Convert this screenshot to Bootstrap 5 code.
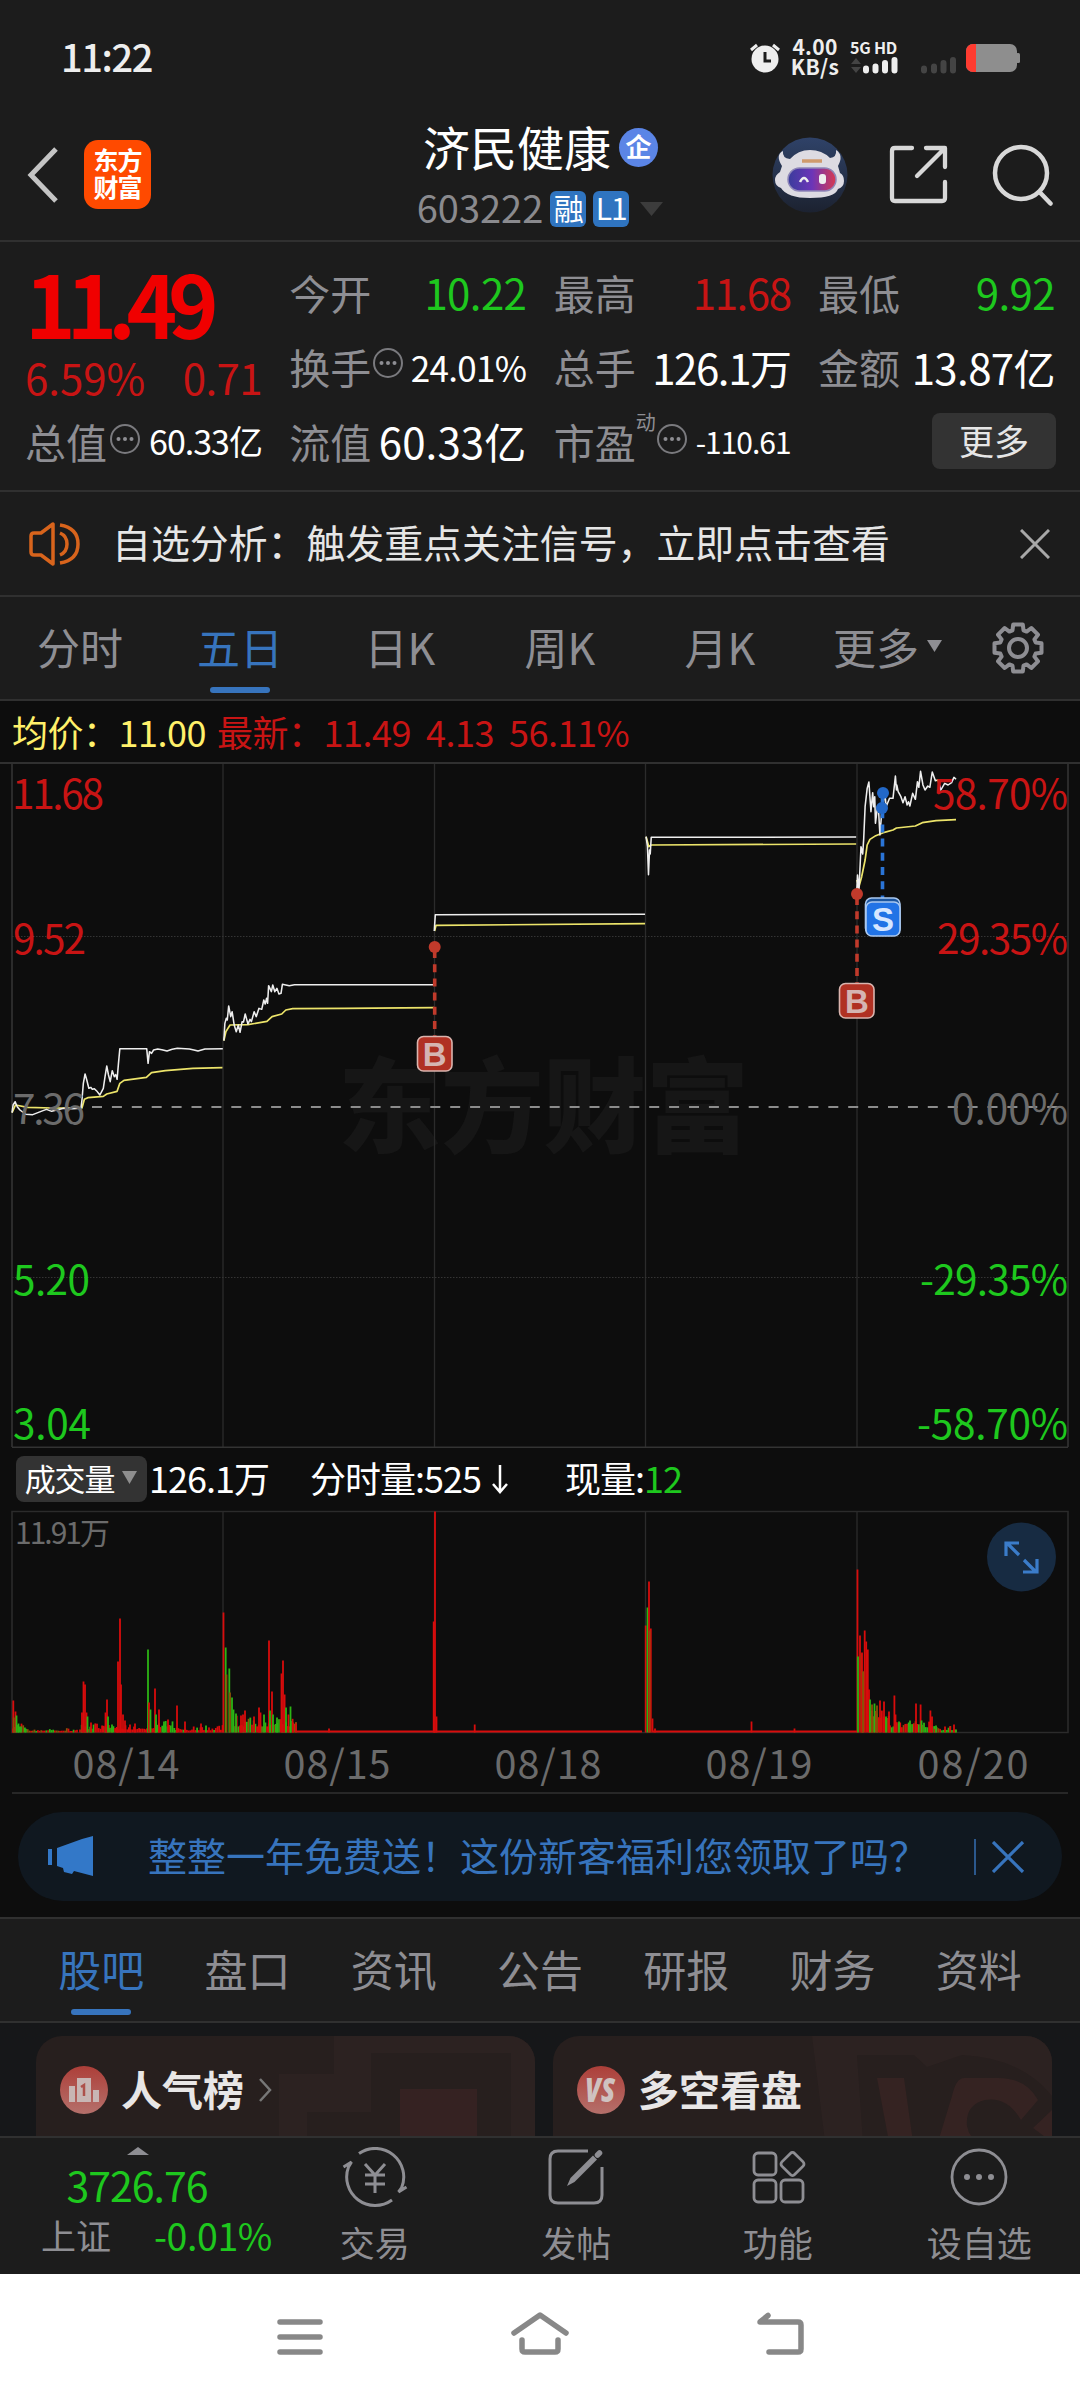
<!DOCTYPE html>
<html lang="zh-CN">
<head>
<meta charset="utf-8">
<meta name="viewport" content="width=device-width, initial-scale=1">
<title>济民健康 603222</title>
<link href="https://cdn.jsdelivr.net/npm/bootstrap@5.3.0/dist/css/bootstrap.min.css" rel="stylesheet">
<style>
body{margin:0;background:#0d0d0d;color:#fff;font-family:"Noto Sans CJK SC",sans-serif;line-height:1;width:1080px;overflow-x:hidden}
svg{display:block;flex:none}
svg text{font-family:"Noto Sans CJK SC",sans-serif}
.panel{background:#1c1c1c}
.line-b{border-bottom:2px solid #303030}
.lbl{color:#8e8e93}
.up{color:#c81414}.dn{color:#1ec81e}.blu{color:#3774bd}
/* status bar */
.statusbar{height:115px;padding:0 59px 0 61px}
.clock{font-size:38px;font-weight:500;letter-spacing:-1.4px;color:#eee;padding-bottom:4px}
.speed{font-size:21px;font-weight:700;line-height:20px;color:#eee;text-align:center;width:54px;letter-spacing:.3px;padding-bottom:4px}
.gen{font-size:16px;font-weight:700;color:#eee;letter-spacing:-.2px;white-space:nowrap;margin-top:-3px;padding-bottom:2px}
.sim2{margin:16px 0 0 21px}
/* header */
.header{height:127px;padding:0 26px 6px 27px}
.h-side{width:270px}
.logo{width:67px;height:69px;border-radius:14px;background:#ff4a00;font-size:25px;font-weight:700;line-height:27px;letter-spacing:-1px}
.ttl{font-size:47px;height:48px;margin-top:4px}
.code{font-size:38px;letter-spacing:0;color:#8a8a8e}
.tagb{width:36px;height:36px;border-radius:6px;background:#2f74c0;font-size:30px;letter-spacing:-1px}
.ent{width:39px;height:39px;border-radius:50%;background:#5b85e6;font-size:26px;font-weight:700}
/* quote */
.quote{height:250px;padding:13px 25px 0 25px}
.qcol{width:237px}
.qrow{height:74.5px;font-size:41px}
.q42{font-size:42px;letter-spacing:-.6px}
.q36{font-size:35px;letter-spacing:-.7px}
.q34{font-size:34px;letter-spacing:-1px}
.q30{font-size:30px;letter-spacing:-1px}
.tight{letter-spacing:-1.4px}
.price{font-size:86px;font-weight:700;letter-spacing:-9.3px;color:#f00000;height:94px}
.chg{height:55px}
.morebtn{width:124px;height:56px;border-radius:8px;background:#333;font-size:35px;color:#e6e6e6;padding-bottom:4px;margin-right:-1px}
.supt{font-size:20px;margin-top:-38px}
/* notice */
.notice{height:105px;padding:0 30px 0 29px;font-size:38.9px;color:#e6e6e6}
/* tabs */
.ktabs{height:104px;font-size:43px;color:#8e8e93}
.ktabs>.tabitem{width:160px}
.ktabs>.tabitem.wide{width:176px}
.tabitem{position:relative;height:100%}
.tabitem.active{color:#3774bd}
.tabitem.active::after{content:"";position:absolute;left:50%;bottom:6px;width:60px;height:6px;border-radius:3px;background:#3774bd;transform:translateX(-50%)}
.inforow{height:63px;font-size:36px;padding:0 12px 2px;letter-spacing:-.5px;white-space:pre}
.volrow{height:62px;padding:0 16px}
.pillsel{width:131px;height:46px;border-radius:8px;background:#333;font-size:31px;letter-spacing:-1.2px}
.v36{font-size:36px;letter-spacing:-1px;white-space:pre}
/* promo */
.promo{margin:18px 18px;height:89px;border-radius:45px;background:#101820;color:#3774bd;font-size:39px;padding:0 37px 0 29px}
.sep{width:2px;height:36px;background:#2b588d}
/* bottom tabs */
.ntabs{height:104px;padding:0 28px;font-size:43px;color:#8e8e93;box-shadow:0 -2px #303030}
.feed{height:115px;background:#161719;padding:13px 28px 0 36px;overflow:hidden}
.topic{position:relative;width:499px;height:140px;border-radius:26px;background:#271f1e;overflow:hidden;font-size:41px;font-weight:700;color:#e8e6e6}
.topic>.bgart{position:absolute;inset:0}
.topic>.topichead{position:relative;height:108px;padding-left:24px}
.dock{height:136px;color:#8e8e93;font-size:35px}
.dockitem{width:201.5px;padding-top:9px}
.docklbl{margin-top:17px}
.idx{width:274px}
.idxval{font-size:41px;letter-spacing:-1px;margin-top:8px}
.idxpct{font-size:37.5px;letter-spacing:-.4px}
.sysnav{height:126px;background:#fff}
.nudge{padding-bottom:4px}
</style>
<script src="https://cdn.jsdelivr.net/npm/bootstrap@5.3.0/dist/js/bootstrap.bundle.min.js"></script>
</head>
<body>
<div class="panel">
  <div class="statusbar d-flex align-items-center justify-content-between">
    <div class="clock">11:22</div>
    <div class="d-flex align-items-center">
      <svg width="30" height="32" viewBox="0 0 30 32"><circle cx="15" cy="17" r="13.500" fill="#eee"/><path d="M1 8 7 3M29 8 23 3" stroke="#eee" stroke-width="3"/><path d="M15 10v9h6" fill="none" stroke="#1c1c1c" stroke-width="3"/></svg>
      <div class="speed ms-2">4.00<br>KB/s</div>
      <div class="ms-2">
        <div class="gen">5G HD</div>
        <svg width="50" height="17" viewBox="0 0 50 17"><path d="M1 7 6 1l5 6zM1 10l5 6 5-6z" fill="#444"/><path d="M16 13.500v-2M25.500 13.500v-4M35 13.500V6M44.500 13.500V3" stroke="#eee" stroke-width="6" stroke-linecap="round"/></svg>
      </div>
      <svg class="sim2" width="36" height="17" viewBox="0 0 36 17"><path d="M3 13.500v-2M13 13.500v-4M22.500 13.500V6M32 13.500V3" stroke="#444" stroke-width="6" stroke-linecap="round"/></svg>
      <svg style="margin-left:9px" width="55" height="28" viewBox="0 0 55 28"><rect width="51" height="28" rx="7" fill="#8e8e8e"/><path d="M10 0H7a7 7 0 0 0-7 7v14a7 7 0 0 0 7 7h3z" fill="#ff3b30"/><rect x="50" y="9" width="4" height="10" rx="1.500" fill="#8e8e8e"/></svg>
    </div>
  </div>
  <div class="header line-b d-flex align-items-center justify-content-between">
    <div class="h-side d-flex align-items-center">
      <svg width="34" height="58" viewBox="0 0 34 58"><path d="M29 3 4 29l25 26" fill="none" stroke="#c4c4c4" stroke-width="5"/></svg>
      <div class="logo d-flex align-items-center justify-content-center text-center nudge" style="margin-left:23px">东方<br>财富</div>
    </div>
    <div class="d-flex flex-column align-items-center">
      <div class="d-flex align-items-center gap-2 ttl"><span class="nudge">济民健康</span><span class="ent d-flex align-items-center justify-content-center pb-1">企</span></div>
      <div class="d-flex align-items-center mt-3" style="gap:7px"><span class="code nudge">603222</span><span class="tagb d-flex align-items-center justify-content-center pb-1">融</span><span class="tagb d-flex align-items-center justify-content-center pb-1">L1</span>
      <svg class="ms-1" width="24" height="16"><path d="M0 1h23L11.500 15z" fill="#3c3c3c"/></svg></div>
    </div>
    <div class="h-side d-flex align-items-center justify-content-end">
      <svg width="76" height="76" viewBox="0 0 76 76"><defs><linearGradient id="vis" x1="0" x2="1"><stop offset="0" stop-color="#3a3c9c"/><stop offset=".5" stop-color="#6c35b8"/><stop offset="1" stop-color="#d83a50"/></linearGradient><linearGradient id="halo" x2="0" y2="1"><stop offset="0" stop-color="#2f4268"/><stop offset="1" stop-color="#1c2230"/></linearGradient></defs><circle cx="38" cy="38" r="37.500" fill="url(#halo)"/><path d="M10 29Q3 18 11 14q-1 7 7 8 8-9 20-9t20 8q7-1 6-8 8 5 2 16l2 7q4 2 4 8t-6 8q-3 9-28 9-23 0-29-10-6-2-6-8 0-5 5-8z" fill="#dddbe2"/><rect x="16" y="31" width="48" height="23" rx="11.500" fill="url(#vis)" stroke="#8e86b8" stroke-width="1.500"/><path d="M28 45q4-8 8 0" stroke="#eee" stroke-width="2.500" fill="none"/><rect x="47" y="37" width="7" height="10" rx="3" fill="#eee"/><path d="M30 24h20" stroke="#cf9a6c" stroke-width="3.500"/></svg>
      <svg style="margin-left:40px" width="62" height="62" viewBox="0 0 62 62" fill="none" stroke="#d8d8d8" stroke-width="4.300" stroke-linecap="round" stroke-linejoin="round"><path d="M24 4H7Q4 4 4 7v47q0 3 3 3h47q3 0 3-3V38M38 4h19v19M56 5 29 32"/></svg>
      <svg style="margin-left:42px" width="62" height="62" viewBox="0 0 62 62" fill="none" stroke="#d8d8d8" stroke-width="4.500" stroke-linecap="round"><circle cx="29" cy="29" r="26"/><path d="m47.500 48 11 11.500"/></svg>
    </div>
  </div>
  <div class="quote line-b d-flex justify-content-between">
    <div class="qcol d-flex flex-column">
      <div class="price d-flex align-items-center">11.49</div>
      <div class="chg d-flex justify-content-between align-items-center up q42"><span style="letter-spacing:0">6.59%</span><span>0.71</span></div>
      <div class="qrow d-flex align-items-center justify-content-between"><span class="lbl d-flex align-items-center">总值<svg style="margin:-3px 0 0 2px" width="32" height="32"><use href="#dots3"/></svg></span><span class="q34">60.33亿</span></div>
    </div>
    <div class="qcol">
      <div class="qrow d-flex align-items-center justify-content-between"><span class="lbl">今开</span><span class="dn q42">10.22</span></div>
      <div class="qrow d-flex align-items-center justify-content-between"><span class="lbl d-flex align-items-center">换手<svg style="margin:-5px 0 0 1px" width="32" height="32"><use href="#dots3"/></svg></span><span class="q36">24.01%</span></div>
      <div class="qrow d-flex align-items-center justify-content-between"><span class="lbl">流值</span><span class="q42" style="letter-spacing:.1px">60.33亿</span></div>
    </div>
    <div class="qcol">
      <div class="qrow d-flex align-items-center justify-content-between"><span class="lbl">最高</span><span class="up q42 tight">11.68</span></div>
      <div class="qrow d-flex align-items-center justify-content-between"><span class="lbl">总手</span><span class="q42 tight">126.1万</span></div>
      <div class="qrow d-flex align-items-center justify-content-between"><span class="lbl d-flex align-items-center">市盈<span class="supt">动</span><svg style="margin-top:-3px" width="32" height="32"><use href="#dots3"/></svg></span><span class="q30">-110.61</span></div>
    </div>
    <div class="qcol">
      <div class="qrow d-flex align-items-center justify-content-between"><span class="lbl">最低</span><span class="dn q42">9.92</span></div>
      <div class="qrow d-flex align-items-center justify-content-between"><span class="lbl">金额</span><span class="q42">13.87亿</span></div>
      <div class="qrow d-flex align-items-center justify-content-end"><span class="morebtn d-flex align-items-center justify-content-center">更多</span></div>
    </div>
  </div>
  <div class="notice line-b d-flex align-items-center">
    <svg width="52" height="44" viewBox="0 0 52 44" fill="none" stroke="#d8641c" stroke-width="3.500" stroke-linejoin="round"><path d="M24 2v40L12 33H5q-3 0-3-3V14q0-3 3-3h7z"/><path d="M31 11q7 3 7 11t-7 11M31 3q18 3 18 19T31 41"/></svg>
    <span class="flex-grow-1 nudge" style="margin-left:31px">自选分析：触发重点关注信号，立即点击查看</span>
    <svg width="30" height="30" stroke="#a8a8a8" stroke-width="3"><path d="m1 1 28 28M29 1 1 29"/></svg>
  </div>
  <div class="ktabs line-b d-flex align-items-center">
    <span class="tabitem d-flex align-items-center justify-content-center nudge">分时</span>
    <span class="tabitem active d-flex align-items-center justify-content-center nudge">五日</span>
    <span class="tabitem d-flex align-items-center justify-content-center nudge">日K</span>
    <span class="tabitem d-flex align-items-center justify-content-center nudge">周K</span>
    <span class="tabitem d-flex align-items-center justify-content-center nudge">月K</span>
    <span class="tabitem wide d-flex align-items-center justify-content-center nudge">更多<svg class="ms-2" width="16" height="12"><path d="M0 0h15L7.500 12z" fill="#8e8e93"/></svg></span>
    <svg style="margin-left:16px" width="52" height="52" viewBox="-26 -26 52 52" fill="none" stroke="#8e8e93" stroke-width="4"><path id="gear" stroke-linejoin="round"/><circle r="9"/></svg>
  </div>
</div>
<div class="inforow line-b d-flex align-items-center"><span style="color:#fff06a">均价：11.00</span><span class="up" style="margin-left:11px">最新：11.49  4.13  56.11%</span></div>

<svg id="price" width="1080" height="684" viewBox="0 764 1080 684">
  <text x="338" y="1145" font-size="103" font-weight="900" textLength="411" fill="#161616">东方财富</text>
  <g stroke="#2b2b2b" stroke-width="1.300"><path d="M223 764v683M434.500 764v683M645.500 764v683M857 764v683"/><path d="M12 764v683M1068 764v683" stroke-width="2"/></g>
  <path d="M12 936.500H1068M12 1277.500H1068" stroke="#343434" stroke-dasharray="1.500 1.500"/>
  <path d="M12 1447.500H1068" stroke="#333" stroke-width="2"/>
  <path d="M92 1107H1066" stroke="#8c8c8c" stroke-width="1.800" stroke-dasharray="10 9.900"/>
  <g fill="none" stroke-linejoin="round" transform="translate(0 820) scale(.34439 .33333)">
    <g stroke="#ece46a" stroke-width="5">
      <path d="M35 878 45 855 80 862 150 864 238 864 245 838 255 833 300 829 310 822 340 814 348 790 360 781 425 772 440 758 480 752 560 745 646 743"/>
      <path d="M650 662 656 635 668 615 720 614 775 604 790 590 818 582 830 570 850 566 1000 565 1260 563"/>
      <path d="M1262 333 1266 316 1873 311"/>
      <path d="M1876 50 1884 80 1891 75 2486 72"/>
      <path d="M2488 180 2494 200 2502 170 2512 120 2518 75 2526 58 2543 47 2568 37 2593 30 2603 24 2658 18 2678 8 2718 2 2776-1"/>
    </g>
    <g stroke="#eee" stroke-width="4.500">
      <path d="M35 878 38 855 44 845 50 860 58 870 75 883 95 884 110 878 125 872 135 868 150 874 165 870 185 865 210 866 235 865 238 840 242 790 247 762 252 780 258 805 264 802 268 808 274 806 280 812 290 825 300 805 305 770 310 738 315 765 320 785 326 752 332 770 336 764 340 778 344 730 348 686 426 686 430 730 434 695 440 700 446 690 458 687 470 689 485 693 500 688 515 685 550 687 563 690 575 693 595 687 647 686"/>
      <path d="M650 662 653 610 657 595 660 600 664 558 670 590 674 575 680 615 686 635 692 615 697 637 703 605 707 606 712 582 720 612 726 598 730 605 738 575 744 590 752 565 760 568 766 540 770 552 774 535 777 550 780 497 788 515 792 495 798 515 804 505 810 522 816 520 820 493 840 497 855 494 1259 494"/>
      <path d="M1261 333 1264 284 1873 283"/>
      <path d="M1876 50 1880 80 1883 164 1886 90 1888 102 1891 52 2486 51"/>
      <path d="M2488 210 2490 165 2494 215 2500 80 2505 102 2508 55 2512-40 2518-95 2523-114 2529-25 2534-82 2537-40 2540-70 2542 10 2548-40 2551-30 2555 45 2560-20 2566-60 2569-85 2573-40 2583-65 2593-65 2600-132 2603-90 2604-105 2608-85 2616-70 2622-52 2628-70 2634-45 2638-55 2642-42 2650-80 2658-62 2664-115 2668-98 2673-146 2680-105 2686-90 2694-102 2700-98 2707-144 2716-118 2723-120 2732-90 2743-110 2753-105 2763-112 2770-128 2776-122"/>
    </g>
  </g>
  <g stroke-dasharray="8 6.200" stroke-width="3.600"><path d="M434.700 950v86M857 897v86" stroke="#c03a2b"/><path d="M882.500 796v102" stroke="#2a74d6"/></g>
  <g fill="#c03a2b"><circle cx="434.700" cy="947" r="6"/><circle cx="857" cy="894" r="6"/></g>
  <g fill="#2268c8"><circle cx="883" cy="793" r="6"/><circle cx="882" cy="808" r="6"/></g>
  <g stroke="#d9b4ae" stroke-width="1.600"><rect x="417.500" y="1036.500" width="34.500" height="34.500" rx="6" fill="#b03123"/><rect x="839.500" y="983.500" width="34.500" height="34.500" rx="6" fill="#b03123"/></g>
  <g stroke="#a9c8f0" stroke-width="1.600"><rect x="865.500" y="898" width="34.500" height="36" rx="6" fill="#1b559f"/><rect x="866" y="902" width="34" height="34" rx="6" fill="#2173e6"/></g>
  <g font-size="33" font-weight="700" text-anchor="middle" style="font-family:'Liberation Sans',sans-serif"><text style="font-family:inherit" x="434.700" y="1066" fill="#d5b5b2">B</text><text style="font-family:inherit" x="857" y="1013" fill="#d5b5b2">B</text><text style="font-family:inherit" x="883" y="931" fill="#d7e7ff">S</text></g>
  <g font-size="40.500">
    <text x="12" y="809" textLength="92" fill="#c81414">11.68</text>
    <text x="13" y="954" textLength="73" fill="#c81414">9.52</text>
    <text x="13" y="1124" textLength="72" fill="#6b6b6b">7.36</text>
    <text x="13" y="1295" textLength="77" fill="#1ec81e">5.20</text>
    <text x="13" y="1439" textLength="78" fill="#1ec81e">3.04</text>
    <g>
      <text x="933" y="809" textLength="135" fill="#c81414">58.70%</text>
      <text x="937" y="954" textLength="131" fill="#c81414">29.35%</text>
      <text x="952" y="1124" textLength="116" fill="#6b6b6b">0.00%</text>
      <text x="920" y="1295" textLength="148" fill="#1ec81e">-29.35%</text>
      <text x="917" y="1439" textLength="151" fill="#1ec81e">-58.70%</text>
    </g>
  </g>
</svg>
<div class="volrow d-flex align-items-center">
  <div class="pillsel d-flex align-items-center justify-content-center nudge">成交量<svg class="ms-2" width="16" height="13"><path d="M0 0h15L7.500 13z" fill="#8e8e8e"/></svg></div>
  <span class="v36 nudge" style="margin-left:2px">126.1万</span><span class="v36 nudge" style="margin-left:41px">分时量:525</span><svg width="18" height="32" viewBox="0 0 18 32" style="margin-left:10px" fill="none" stroke="#fff" stroke-width="2.500"><path d="M9 2v27M2 21l7 8 7-8"/></svg>
  <span class="v36 nudge" style="margin-left:56px">现量:<span class="dn">12</span></span>
</div>
<svg id="volume" width="1080" height="284" viewBox="0 1510 1080 284">
  <g fill="none" stroke="#2b2b2b"><path d="M12 1511.500H1068V1732.500H12z" stroke-width="1.600"/><path d="M223 1511v221M434.500 1511v221M645.500 1511v221M857 1511v221" stroke-width="1.300"/></g>
  <g id="bars"></g>
  <text x="15" y="1544" font-size="30" textLength="95" fill="#6b6b6b">11.91万</text>
  <g font-size="39.500" fill="#6b6b6b" text-anchor="middle"><text x="126" y="1779" textLength="107">08/14</text><text x="337" y="1779" textLength="107">08/15</text><text x="548" y="1779" textLength="107">08/18</text><text x="759" y="1779" textLength="107">08/19</text><text x="973" y="1779" textLength="111">08/20</text></g>
  <path d="M12 1793H1068" stroke="#272727" stroke-width="2"/>
  <circle cx="1021.500" cy="1557" r="34.500" fill="#172b42"/>
  <path d="M1019 1543h-13v13M1007 1543l12 12M1024 1560l12 12M1037 1559v13h-14" fill="none" stroke="#3b7cc9" stroke-width="3.200"/>
</svg>
<div class="promo d-flex align-items-center">
  <svg width="47" height="42" viewBox="0 0 47 42" fill="#3378c8"><path d="M1 13h4v16H1zM10 12l25-9 11-3v40l-19-5-2 3-8-2-1-4-6-2z"/></svg>
  <span class="flex-grow-1 nudge" style="margin-left:54px">整整一年免费送！这份新客福利您领取了吗？</span>
  <span class="sep"></span>
  <svg style="margin-left:16px" width="33" height="32" stroke="#3774bd" stroke-width="3.200"><path d="m1 1 30 30M31 1 1 31"/></svg>
</div>
<div class="panel ntabs line-b d-flex">
  <span class="tabitem active flex-fill d-flex align-items-center justify-content-center nudge">股吧</span><span class="tabitem flex-fill d-flex align-items-center justify-content-center nudge">盘口</span><span class="tabitem flex-fill d-flex align-items-center justify-content-center nudge">资讯</span><span class="tabitem flex-fill d-flex align-items-center justify-content-center nudge">公告</span><span class="tabitem flex-fill d-flex align-items-center justify-content-center nudge">研报</span><span class="tabitem flex-fill d-flex align-items-center justify-content-center nudge">财务</span><span class="tabitem flex-fill d-flex align-items-center justify-content-center nudge">资料</span>
</div>
<div class="feed d-flex justify-content-between line-b">
  <div class="topic">
    <svg class="bgart" width="499" height="140"><path d="M298 0h201v140H475V17H335v59h-64v64h-28V38h55z" fill="#2c2221"/><path d="M364 53h77v87h-77z" fill="#352222"/></svg>
    <div class="topichead d-flex align-items-center"><svg width="48" height="48" viewBox="0 0 48 48"><defs><linearGradient id="redc" x2="0" y2="1"><stop offset="0" stop-color="#ad3f39"/><stop offset="1" stop-color="#b5706b"/></linearGradient></defs><circle cx="24" cy="24" r="24" fill="url(#redc)"/><path d="M9 20h6v16H9zM17 12h14v24H17zM33 24h6v12h-6z" fill="#c8b6b4"/><path d="m21 21 3-2v11" fill="none" stroke="#ad514b" stroke-width="2.500"/></svg><span class="nudge" style="margin-left:13px">人气榜</span><svg style="margin-left:14px" width="14" height="26" fill="none" stroke="#777" stroke-width="2.500"><path d="m2 2 10 11L2 24"/></svg></div>
  </div>
  <div class="topic">
    <svg class="bgart" width="499" height="140"><path d="M259 0h240v60q-30-38-90-41l-35 12-13-12h-57l6 87h-38z" fill="#2c2221"/><path d="M324 42h27l9 64h-24zM385 106l14-46q4-18 12-18h34q28 0 40 22l-17 20q-14-24-36-20-20 5-18 26 3 16 18 16zM480 92l19-18v32z" fill="#352322"/></svg>
    <div class="topichead d-flex align-items-center"><svg width="48" height="48" viewBox="0 0 48 48"><circle cx="24" cy="24" r="24" fill="url(#redc)"/><text x="23" y="36" text-anchor="middle" textLength="30" lengthAdjust="spacingAndGlyphs" font-size="33" font-weight="800" font-style="italic" fill="#cfc2c0" style="font-family:'Open Sans',sans-serif">VS</text></svg><span class="nudge" style="margin-left:13px">多空看盘</span></div>
  </div>
</div>
<div class="panel dock d-flex">
  <div class="idx d-flex flex-column">
    <svg style="margin:9px 0 0 127px" width="22" height="9"><path d="M0 8 11 0l11 8z" fill="#8e8e93"/></svg>
    <div class="dn text-center idxval">3726.76</div>
    <div class="d-flex justify-content-between align-items-center" style="padding:0 2px 0 41px;margin-top:11px"><span>上证</span><span class="dn idxpct">-0.01%</span></div>
  </div>
  <div class="dockitem d-flex flex-column align-items-center">
    <svg width="66" height="60" viewBox="-33 -30 66 60" fill="none" stroke="#8e8e93" stroke-width="3"><path d="M-16-23.500A28.500 28.500 0 0 1 26.500 11l-3 4 8-5M17 23A28.500 28.500 0 0 1-26.500-10l3-5-8 5"/><path d="M-10-13 0-2-10-13M10-13 0-2V16M-10-2h20M-10 7h20"/></svg><span class="docklbl">交易</span></div>
  <div class="dockitem d-flex flex-column align-items-center">
    <svg width="60" height="60" viewBox="0 0 60 60" fill="none" stroke="#8e8e93" stroke-width="3"><path d="M42 4H12Q4 4 4 12v36q0 8 8 8h36q8 0 8-8V20"/><path d="M21 39 24.500 31 47 8.500 51 12.500 28.500 35z" fill="#8e8e93" stroke="none"/><path d="m51.500 8 2-2" stroke-width="5.500" stroke-linecap="round"/></svg><span class="docklbl">发帖</span></div>
  <div class="dockitem d-flex flex-column align-items-center">
    <svg width="60" height="60" viewBox="0 0 60 60" fill="none" stroke="#8e8e93" stroke-width="2.800"><rect x="6" y="6" width="22" height="22" rx="4"/><rect x="6" y="33" width="22" height="22" rx="4"/><rect x="33" y="33" width="22" height="22" rx="4"/><rect x="35.500" y="8" width="18" height="18" rx="3" transform="rotate(45 44.500 17)"/></svg><span class="docklbl">功能</span></div>
  <div class="dockitem d-flex flex-column align-items-center">
    <svg width="60" height="60" viewBox="-30 -30 60 60" fill="#8e8e93"><circle r="27" fill="none" stroke="#8e8e93" stroke-width="2.800"/><circle cx="-12" r="3"/><circle r="3"/><circle cx="12" r="3"/></svg><span class="docklbl">设自选</span></div>
</div>
<div class="sysnav d-flex justify-content-center">
  <svg width="540" height="126" viewBox="270 2274 540 126" fill="none" stroke="#888" stroke-width="5.500" stroke-linecap="round" stroke-linejoin="round"><path d="M280 2322h40M280 2337h40M280 2352h40"/><path d="m514 2333 26-18 26 18M522 2340v9q0 3 3 3h30q3 0 3-3v-9"/><path d="M769 2352h29q3 0 3-3v-24q0-3-3-3h-38l8-6.500"/></svg>
</div>
<svg width="0" height="0" class="position-absolute"><symbol id="dots3" viewBox="0 0 32 32"><circle cx="16" cy="15" r="14" fill="none" stroke="#7a7a7e" stroke-width="2"/><g fill="#8e8e93"><circle cx="9.500" cy="15" r="2"/><circle cx="16" cy="15" r="2"/><circle cx="22.500" cy="15" r="2"/></g></symbol></svg>
<script>
// gear outline: eight soft teeth around the hub
(function(){
  var d='';
  for(var i=0;i<8;i++){
    var a=i*Math.PI/4-Math.PI/2;
    [[-.3,18.5],[-.2,24],[.2,24],[.3,18.5]].forEach(function(p){
      d+=(d?'L':'M')+(p[1]*Math.cos(a+p[0])).toFixed(1)+' '+(p[1]*Math.sin(a+p[0])).toFixed(1);
    });
  }
  document.getElementById('gear').setAttribute('d',d+'Z');
})();
// volume: each entry is x, bar height, colour key (r up, g down, o overlapping)
(function(){
  var col={r:'#d80c0c',g:'#2cb414',o:'#8a5208'};
  var s='';
  function bar(x,h,c,w){s+='<rect x="'+(x-(w||1.8)/2).toFixed(1)+'" y="'+(1732.5-h).toFixed(1)+'" width="'+(w||1.8)+'" height="'+h+'" fill="'+col[c]+'"/>';}
  var seed=7;function rnd(){seed=(seed*16807)%2147483647;return seed/2147483647;}
  function noise(a,b,lo,hi,keys){for(var x=a;x<b;x+=1.7)bar(x,+(lo+rnd()*rnd()*(hi-lo)).toFixed(1),keys[Math.floor(rnd()*keys.length)]);}
  noise(13,26,4,14,'rgo');noise(26,78,1.5,5,'rrgo');noise(80,110,3,11,'grr');noise(110,117,4,9,'gro');
  noise(117,147,3,8,'r');noise(147,175,4,14,'rrg');noise(175,223,2,8,'rrrg');
  noise(235,262,6,19,'rgo');noise(262,297,6,17,'rog');
  bar(366,2,'r',138);bar(538,2,'r',208);bar(755,2,'r',204);
  noise(870,890,14,28,'ro');noise(890,935,5,14,'rgo');noise(935,957,2,8,'gro');
  var v=[13.3,32,'r',13.8,15,'o',15.5,21,'r',16.5,17,'g',18.5,9,'g',21,6,'g',82,20,'r',83.5,51,'r',85,48,'r',86.5,20,'r',87.5,16,'g',91,10,'r',105.5,20,'r',107,33,'r',108,16,'g',112,8,'g',
  118,71,'r',120,114,'r',121,48,'r',123,18,'r',125,12,'r',130,8,'r',135,9,'r',148,83,'g',149,30,'r',150.5,23,'g',155,44,'r',156,18,'g',159,23,'r',164,11,'g',168,13,'r',177,27,'r',185,11,'r',201,9,'r',206,7,'g',
  223.5,120,'r',225.7,85,'g',226.5,58,'o',229.3,64,'g',230,40,'o',232,35,'g',233.5,23,'g',236,19,'g',241,17,'r',243,18,'r',245,22,'r',254,16,'r',259,25,'r',260.5,20,'r',264,18,'g',269,92,'r',270,22,'g',272,41,'r',273,18,'g',277,15,'g',
  281.5,59,'r',283,72,'r',284.6,38,'r',286,25,'g',288.5,18,'r',290.5,26,'g',293,10,'r',296,9,'r',329,4,'r',433.7,111,'r',435,221,'r',436.5,16,'r',474.7,8,'r',
  645.7,107,'r',647.5,125,'g',649,151,'r',650.8,104,'r',649.5,102,'o',652.5,14,'r',655,4,'r',751.5,11,'r',794.5,4,'r',
  857.5,163,'r',858,76,'g',860,97,'r',861.5,79,'o',862,80,'r',863,61,'o',864.7,102,'r',866.2,91,'r',867.8,83,'r',863.3,61,'o',869,43,'r',870,33,'g',872,28,'o',874.5,29,'g',877,27,'o',880,32,'r',884,31,'r',886,16,'g',889,21,'r',894.4,37,'r',895.5,18,'r',899,11,'g',910,12,'g',916,29,'r',920.6,28,'r',921.5,12,'g',930.4,22,'r',932,16,'r',936,7,'g',945,6,'r',950,6,'r',954,8,'r',956,3,'g'];
  for(var i=0;i<v.length;i+=3)bar(v[i],v[i+1],v[i+2]);
  document.getElementById('bars').innerHTML=s;
})();
</script>
</body>
</html>
